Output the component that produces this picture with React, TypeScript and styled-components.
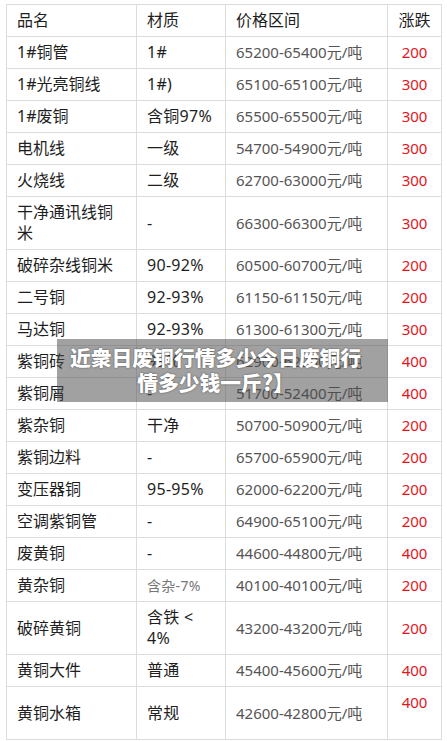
import React from "react";
import styled, { createGlobalStyle } from "styled-components";

const GlobalStyle = createGlobalStyle`
  html, body { margin: 0; padding: 0; background: #ffffff; }
  body { font-family: "Noto Sans", "Noto Sans CJK SC", sans-serif; }
`;

const Page = styled.div`
  position: relative;
  padding: 4px 6px 4px 6px;
  width: 435px;
`;

const Table = styled.table`
  width: 435px;
  border-collapse: collapse;
  table-layout: fixed;
  font-size: 16px;
  line-height: 21px;
  color: #222;
`;

const Col = styled.col<{ $w: number }>`
  width: ${(p) => p.$w}px;
`;

type Kind = "name" | "mat" | "price" | "chg" | "head" | "headc";

const Cell = styled.td<{ $kind?: Kind; $small?: boolean; $top?: boolean }>`
  border: 1px solid #dcdcdc;
  padding: 5px 10px;
  vertical-align: ${(p) => (p.$top ? "top" : "middle")};
  text-align: ${(p) => (p.$kind === "chg" || p.$kind === "headc" ? "center" : "left")};
  color: ${(p) =>
    p.$kind === "price" ? "#555" : p.$kind === "chg" ? "#e2141e" : p.$small ? "#777" : "#1e1e1e"};
  font-size: ${(p) =>
    p.$small ? "14px" : p.$kind === "price" || p.$kind === "chg" ? "15px" : "16px"};
  letter-spacing: ${(p) => (p.$kind === "mat" ? "0.3px" : "0")};
  height: ${(p) => (p.$top ? "42px" : "auto")};
  word-break: break-all;
`;

const Caption = styled.div`
  position: absolute;
  left: 57px;
  top: 339px;
  width: 331px;
  height: 63px;
  box-sizing: border-box;
  padding: 6px 22px 0 8px;
  background: rgba(75, 75, 75, 0.52);
  color: #fff;
  font-family: "Noto Sans CJK SC", sans-serif;
  font-weight: 900;
  font-size: 20.8px;
  line-height: 25px;
  text-align: center;
  text-shadow: 0 0 2px rgba(0, 0, 0, 0.55);
`;

type Row = { n: React.ReactNode; m: React.ReactNode; p: string; c: string; small?: boolean; top?: boolean };

const rows: Row[] = [
  { n: "1#铜管", m: "1#", p: "65200-65400元/吨", c: "200" },
  { n: "1#光亮铜线", m: "1#)", p: "65100-65100元/吨", c: "300" },
  { n: "1#废铜", m: "含铜97%", p: "65500-65500元/吨", c: "300" },
  { n: "电机线", m: "一级", p: "54700-54900元/吨", c: "300" },
  { n: "火烧线", m: "二级", p: "62700-63000元/吨", c: "300" },
  { n: <>干净通讯线铜<br />米</>, m: "-", p: "66300-66300元/吨", c: "300" },
  { n: "破碎杂线铜米", m: "90-92%", p: "60500-60700元/吨", c: "200" },
  { n: "二号铜", m: "92-93%", p: "61150-61150元/吨", c: "200" },
  { n: "马达铜", m: "92-93%", p: "61300-61300元/吨", c: "300" },
  { n: "紫铜砖", m: "99%", p: "62900-62900元/吨", c: "400" },
  { n: "紫铜屑", m: "-", p: "51700-52400元/吨", c: "400" },
  { n: "紫杂铜", m: "干净", p: "50700-50900元/吨", c: "200" },
  { n: "紫铜边料", m: "-", p: "65700-65900元/吨", c: "200" },
  { n: "变压器铜", m: "95-95%", p: "62000-62200元/吨", c: "200" },
  { n: "空调紫铜管", m: "-", p: "64900-65100元/吨", c: "200" },
  { n: "废黄铜", m: "-", p: "44600-44800元/吨", c: "400" },
  { n: "黄杂铜", m: "含杂-7%", p: "40100-40100元/吨", c: "200", small: true },
  { n: "破碎黄铜", m: <>含铁 &lt;<br />4%</>, p: "43200-43200元/吨", c: "200" },
  { n: "黄铜大件", m: "普通", p: "45400-45600元/吨", c: "400" },
  { n: "黄铜水箱", m: "常规", p: "42600-42800元/吨", c: "400", top: true },
];

export default function App() {
  return (
    <>
      <GlobalStyle />
      <Page>
        <Table>
          <colgroup>
            <Col $w={130} />
            <Col $w={89} />
            <Col $w={162} />
            <Col $w={54} />
          </colgroup>
          <tbody>
            <tr>
              <Cell $kind="head">品名</Cell>
              <Cell $kind="head">材质</Cell>
              <Cell $kind="head">价格区间</Cell>
              <Cell $kind="headc">涨跌</Cell>
            </tr>
            {rows.map((r, i) => (
              <tr key={i}>
                <Cell $kind="name">{r.n}</Cell>
                <Cell $kind="mat" $small={r.small}>{r.m}</Cell>
                <Cell $kind="price">{r.p}</Cell>
                <Cell $kind="chg" $top={r.top}>{r.c}</Cell>
              </tr>
            ))}
          </tbody>
        </Table>
        <Caption>
          近衆日废铜行情多少今日废铜行情多少钱一斤?】
        </Caption>
      </Page>
    </>
  );
}
